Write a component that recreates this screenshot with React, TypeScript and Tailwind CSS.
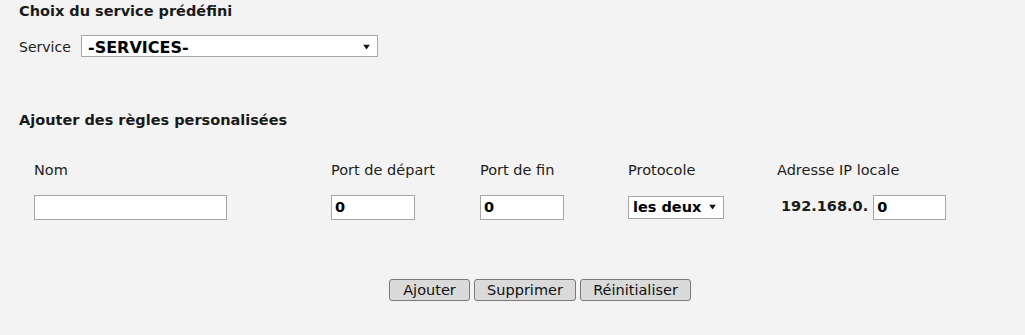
import React, { useState } from 'react';

// Small down-pointing triangle used by the custom selects
const Caret = () => (
  <svg width="7" height="5" viewBox="0 0 7 5" className="pointer-events-none absolute right-[8px] top-1/2 -translate-y-1/2">
    <path d="M0 0h7L3.5 5z" fill="#111" />
  </svg>
);

const App = () => {
  const [service, setService] = useState('');
  const [rule, setRule] = useState({
    nom: '',
    portStart: '0',
    portEnd: '0',
    protocol: 'both',
    ip: '0',
  });

  const update = (key: keyof typeof rule) => (e: React.ChangeEvent<HTMLInputElement | HTMLSelectElement>) =>
    setRule((prev) => ({ ...prev, [key]: e.target.value }));

  const reset = () => setRule({ nom: '', portStart: '0', portEnd: '0', protocol: 'both', ip: '0' });

  const inputCls =
    'h-[25px] border border-[#a6a6a6] bg-white px-[3px] text-[14.5px] font-bold text-black outline-none';
  const btnCls =
    'h-[22px] rounded-[3px] border border-[#7a7a7a] bg-[#dadada] text-[14.5px] leading-[20px] text-[#111]';

  return (
    <div className="min-h-[335px] w-full bg-[#f3f3f3] pl-[19px] pt-[1px] font-['DejaVu_Sans',sans-serif] text-[14.5px] text-[#1c1c1c]">
      {/* Predefined service */}
      <h2 className="text-[14.5px] leading-[20px] font-bold text-[#1a1a1a]">Choix du service prédéfini</h2>
      <div className="mt-[14px] flex items-center">
        <label htmlFor="service" className="w-[62px] text-[14px]">Service</label>
        <div className="relative">
          <select
            id="service"
            value={service}
            onChange={(e) => setService(e.target.value)}
            className="h-[22px] w-[297px] appearance-none border border-[#a6a6a6] bg-white pl-[6px] text-[16px] font-bold text-black outline-none"
          >
            <option value="">-SERVICES-</option>
            <option value="http">HTTP</option>
            <option value="ftp">FTP</option>
          </select>
          <Caret />
        </div>
      </div>

      {/* Custom rules */}
      <h2 className="mt-[50px] text-[14.5px] leading-[20px] font-bold text-[#1a1a1a]">Ajouter des règles personalisées</h2>

      <div className="mt-[30px] grid grid-cols-[297px_149px_148px_149px_auto] pl-[15px]">
        <div className="h-[35px]">Nom</div>
        <div>Port de départ</div>
        <div>Port de fin</div>
        <div>Protocole</div>
        <div>Adresse IP locale</div>

        <div>
          <input type="text" value={rule.nom} onChange={update('nom')} className={`${inputCls} w-[193px]`} />
        </div>
        <div>
          <input type="text" value={rule.portStart} onChange={update('portStart')} className={`${inputCls} w-[84px]`} />
        </div>
        <div>
          <input type="text" value={rule.portEnd} onChange={update('portEnd')} className={`${inputCls} w-[84px]`} />
        </div>
        <div className="pt-[1px]">
          <div className="relative w-[96px]">
            <select
              value={rule.protocol}
              onChange={update('protocol')}
              className="h-[23px] w-[96px] appearance-none border border-[#a6a6a6] bg-white pl-[4px] text-[14.5px] font-bold text-black outline-none"
            >
              <option value="both">les deux</option>
              <option value="tcp">TCP</option>
              <option value="udp">UDP</option>
            </select>
            <Caret />
          </div>
        </div>
        <div className="flex items-center gap-[5px] pl-[4px]">
          <span className="text-[14.5px] font-bold text-[#1a1a1a]">192.168.0.</span>
          <input type="text" value={rule.ip} onChange={update('ip')} className={`${inputCls} w-[73px]`} />
        </div>
      </div>

      <div className="mt-[59px] flex gap-[4px] pl-[370px]">
        <button className={`${btnCls} w-[81px]`}>Ajouter</button>
        <button className={`${btnCls} w-[102px]`}>Supprimer</button>
        <button className={`${btnCls} w-[111px]`} onClick={reset}>Réinitialiser</button>
      </div>
    </div>
  );
};

export default App;
